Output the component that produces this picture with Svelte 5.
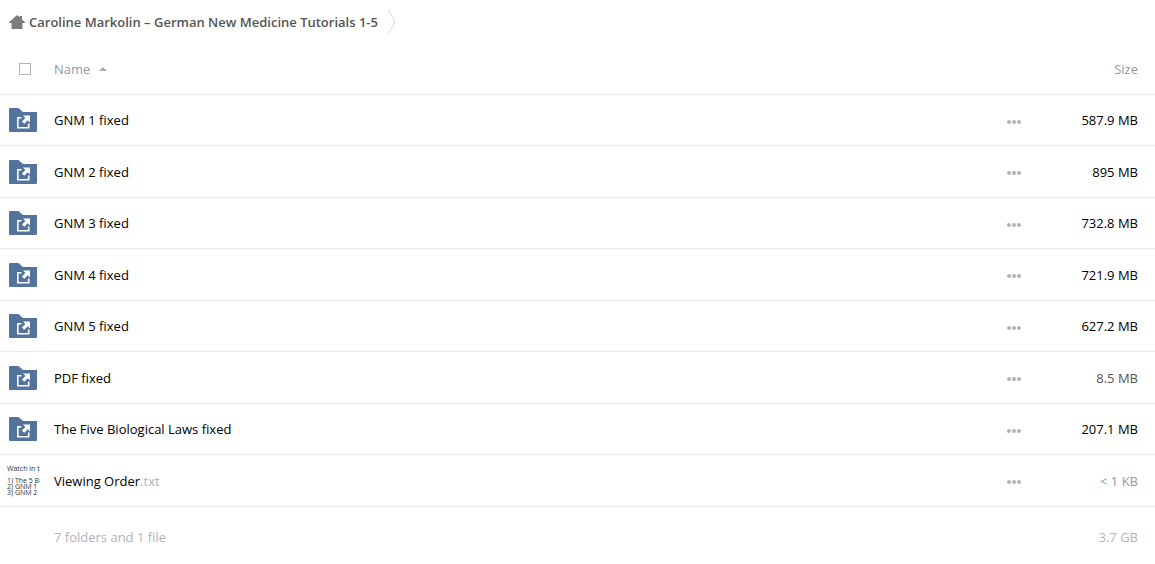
<script>
  const files = [
    { name: 'GNM 1 fixed', size: '587.9 MB', tone: 'large' },
    { name: 'GNM 2 fixed', size: '895 MB', tone: 'large' },
    { name: 'GNM 3 fixed', size: '732.8 MB', tone: 'large' },
    { name: 'GNM 4 fixed', size: '721.9 MB', tone: 'large' },
    { name: 'GNM 5 fixed', size: '627.2 MB', tone: 'large' },
    { name: 'PDF fixed', size: '8.5 MB', tone: 'medium' },
    { name: 'The Five Biological Laws fixed', size: '207.1 MB', tone: 'large' },
    { name: 'Viewing Order', ext: '.txt', size: '< 1 KB', tone: 'small', preview: 'Watch in th\n\n1) The 5 Bi\n2) GNM 1\n3) GNM 2' }
  ];
</script>

<nav class="crumbs">
  <a class="crumb" href="#root">
    <svg class="home" width="16" height="14" viewBox="0 0 16 14" aria-hidden="true">
      <path d="M8 0 L10.5 2.2 V1 H13 V4.4 L16 7.2 V8 H13.5 V14 H2.5 V8 H0 V7.2Z" fill="#7c7c7c" />
    </svg>
    <span>Caroline Markolin – German New Medicine Tutorials 1-5</span>
  </a>
  <svg width="8" height="24" viewBox="0 0 8 24" aria-hidden="true">
    <path d="M0.5 0 L7 12 L0.5 24" fill="none" stroke="#d8d8d8" />
  </svg>
</nav>

<table>
  <colgroup>
    <col class="col-icon" />
    <col />
    <col class="col-menu" />
    <col class="col-size" />
  </colgroup>
  <thead>
    <tr>
      <th class="select"><input type="checkbox" aria-label="Select all" /></th>
      <th class="name">
        <button class="sort">Name
          <svg width="8" height="4" viewBox="0 0 8 4" aria-hidden="true"><path d="M0 4 L4 0 L8 4Z" fill="#aaa" /></svg>
        </button>
      </th>
      <th></th>
      <th class="size"><button class="sort">Size</button></th>
    </tr>
  </thead>
  <tbody>
    {#each files as file}
      <tr>
        <td class="icon">
          {#if file.preview}
            <div class="preview">{file.preview}</div>
          {:else}
            <svg class="folder" width="28" height="24" viewBox="0 0 28 24" aria-hidden="true">
              <path d="M0 1 Q0 0 1 0 H9.5 L14 4 H28 V23 Q28 24 27 24 H1 Q0 24 0 23Z" fill="#54739c" />
              <path d="M12.5 9.8 H8.8 V19.7 H19.7 V15.5" fill="none" stroke="#fff" stroke-width="1.6" />
              <path d="M14 7.5 H21 V14.5 L18.8 12.3 L15.3 15.8 L12.9 13.4 L16.4 9.9Z" fill="#fff" />
            </svg>
          {/if}
        </td>
        <td class="name"><a href="#file">{file.name}{#if file.ext}<span class="ext">{file.ext}</span>{/if}</a></td>
        <td class="menu">
          <button class="more" aria-label="Actions for {file.name}">
            <svg width="14" height="4" viewBox="0 0 14 4" aria-hidden="true">
              <g fill="#b3b3b3"><circle cx="2" cy="2" r="2" /><circle cx="7" cy="2" r="2" /><circle cx="12" cy="2" r="2" /></g>
            </svg>
          </button>
        </td>
        <td class="size {file.tone}">{file.size}</td>
      </tr>
    {/each}
  </tbody>
  <tfoot>
    <tr>
      <td></td>
      <td class="name">7 folders and 1 file</td>
      <td></td>
      <td class="size">3.7 GB</td>
    </tr>
  </tfoot>
</table>

<style>
  :global(body) {
    margin: 0;
    background: #fff;
    color: #000;
    font: 13px/20px "Open Sans", sans-serif;
  }
  .crumbs {
    display: flex;
    align-items: center;
    gap: 10px;
    height: 44px;
    padding-left: 9px;
  }
  .crumb {
    display: flex;
    align-items: center;
    gap: 4px;
    color: #555;
    font-weight: 600;
  }
  a {
    color: inherit;
    text-decoration: none;
  }
  svg {
    display: block;
    flex: none;
  }
  table {
    width: 100%;
    table-layout: fixed;
    border-collapse: separate;
    border-spacing: 0;
  }
  .col-icon { width: 54px; }
  .col-menu { width: 40px; }
  .col-size { width: 121px; }
  th, td {
    box-sizing: border-box;
    padding: 0;
    text-align: left;
    vertical-align: middle;
    font-weight: 400;
  }
  th, tbody td {
    border-bottom: 1px solid #ebebeb;
  }
  th {
    height: 51px;
    color: #999;
  }
  thead .name, thead .size { padding-bottom: 1px; }
  tbody td { height: 51px; }
  tbody tr:nth-child(even) td { height: 52px; }
  tfoot td {
    height: 60px;
    color: #b3b3b3;
  }
  .select { padding-left: 19px; }
  input {
    display: block;
    appearance: none;
    box-sizing: border-box;
    width: 12px;
    height: 12px;
    margin: 0;
    border: 1px solid #b3b3b3;
    background: #fff;
  }
  button {
    padding: 0;
    border: 0;
    background: none;
    color: inherit;
    font: inherit;
    cursor: pointer;
  }
  .sort {
    display: flex;
    align-items: center;
    gap: 9px;
  }
  .size {
    padding-right: 17px;
    text-align: right;
  }
  .size .sort { margin-left: auto; }
  .folder { margin-left: 9px; }
  .preview {
    box-sizing: border-box;
    width: 33px;
    height: 32px;
    margin-left: 7px;
    padding-top: 1px;
    overflow: hidden;
    white-space: pre;
    color: #333;
    font-size: 7px;
    line-height: 6px;
  }
  .more {
    display: block;
    margin: 0 auto;
    padding: 10px 4px 8px;
  }
  tbody .menu { padding-top: 1px; }
  .ext { color: #b3b3b3; }
  .medium { color: #555; }
  .small { color: #999; }
</style>
